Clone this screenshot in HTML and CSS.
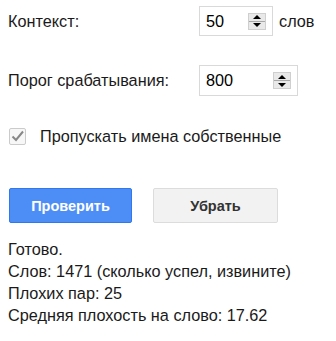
FILE: index.html
```html
<!DOCTYPE html>
<html lang="ru">
<head>
  <meta charset="UTF-8">
  <title>Проверка текста</title>
  <link rel="stylesheet" href="styles.css">
</head>
<body>
<div class="panel">
  <div class="field">
    <label class="label" for="context">Контекст:</label>
    <div class="num small">
      <input type="text" id="context" value="50">
      <span class="spin"><i class="up"></i><i class="down"></i></span>
    </div>
    <span class="unit">слов</span>
  </div>

  <div class="field second">
    <label class="label" for="threshold">Порог срабатывания:</label>
    <div class="num wide">
      <input type="text" id="threshold" value="800">
      <span class="spin"><i class="up"></i><i class="down"></i></span>
    </div>
  </div>

  <label class="check">
    <span class="box">
      <svg width="15" height="15" viewBox="0 0 15 15"><path d="M2.5 7.5 L6 11 L13 2.5" fill="none" stroke="#888" stroke-width="2"/></svg>
    </span>
    Пропускать имена собственные
  </label>

  <div class="buttons">
    <button class="btn primary">Проверить</button>
    <button class="btn plain">Убрать</button>
  </div>

  <div class="status">
    <div>Готово.</div>
    <div>Слов: 1471 (сколько успел, извините)</div>
    <div>Плохих пар: 25</div>
    <div>Средняя плохость на слово: 17.62</div>
  </div>
</div>
</body>
</html>
```

FILE: styles.css
```css
body {
  margin: 0;
  font-family: "Liberation Sans", Arial, sans-serif;
  font-size: 16.25px;
  color: #1a1a1a;
  background: #fff;
}
.panel {
  padding: 6px 8px 0 8px;
}
.field {
  display: flex;
  align-items: center;
  height: 30px;
}
.field.second {
  margin-top: 29px;
  height: 31px;
}
.label {
  width: 191px;
}
.num {
  display: flex;
  align-items: center;
  box-sizing: border-box;
  height: 100%;
  border: 1px solid #d9d9d9;
  padding: 0 6px 0 6px;
}
.num.small {
  width: 74px;
}
.num.wide {
  width: 99px;
}
.num input {
  flex: 1;
  min-width: 0;
  border: none;
  outline: none;
  padding: 0;
  font: inherit;
  color: #000;
  background: transparent;
}
.spin {
  display: flex;
  flex-direction: column;
  box-sizing: border-box;
  width: 18px;
  height: 17px;
  border: 1px solid #cfcfcf;
  background: #e9e9e9;
}
.spin i {
  flex: 1;
  display: flex;
  align-items: center;
  justify-content: center;
}
.spin i::before {
  content: "";
  border-left: 4px solid transparent;
  border-right: 4px solid transparent;
}
.spin .up {
  border-bottom: 1px solid #a8a8a8;
}
.spin .up::before {
  border-bottom: 4px solid #000;
}
.spin .down::before {
  border-top: 4px solid #000;
}
.unit {
  margin-left: 6px;
}
.check {
  display: flex;
  align-items: center;
  margin-top: 32px;
  height: 17px;
}
.box {
  display: flex;
  align-items: center;
  justify-content: center;
  box-sizing: border-box;
  width: 17px;
  height: 17px;
  margin-left: 1px;
  margin-right: 14px;
  border: 1px solid #cbcbcb;
  border-radius: 2px;
  background: #f7f7f7;
}
.buttons {
  display: flex;
  gap: 21px;
  margin-top: 43px;
  padding-left: 1px;
}
.btn {
  box-sizing: border-box;
  height: 35px;
  font-family: "Liberation Sans", Arial, sans-serif;
  font-size: 14.5px;
  font-weight: bold;
  border-radius: 2px;
}
.primary {
  width: 123px;
  color: #fff;
  background: #4d8ef6;
  border: 1px solid #3078ec;
}
.plain {
  width: 125px;
  color: #333;
  background: #f2f2f2;
  border: 1px solid #dcdcdc;
}
.status {
  margin-top: 15px;
  line-height: 22px;
}
```
